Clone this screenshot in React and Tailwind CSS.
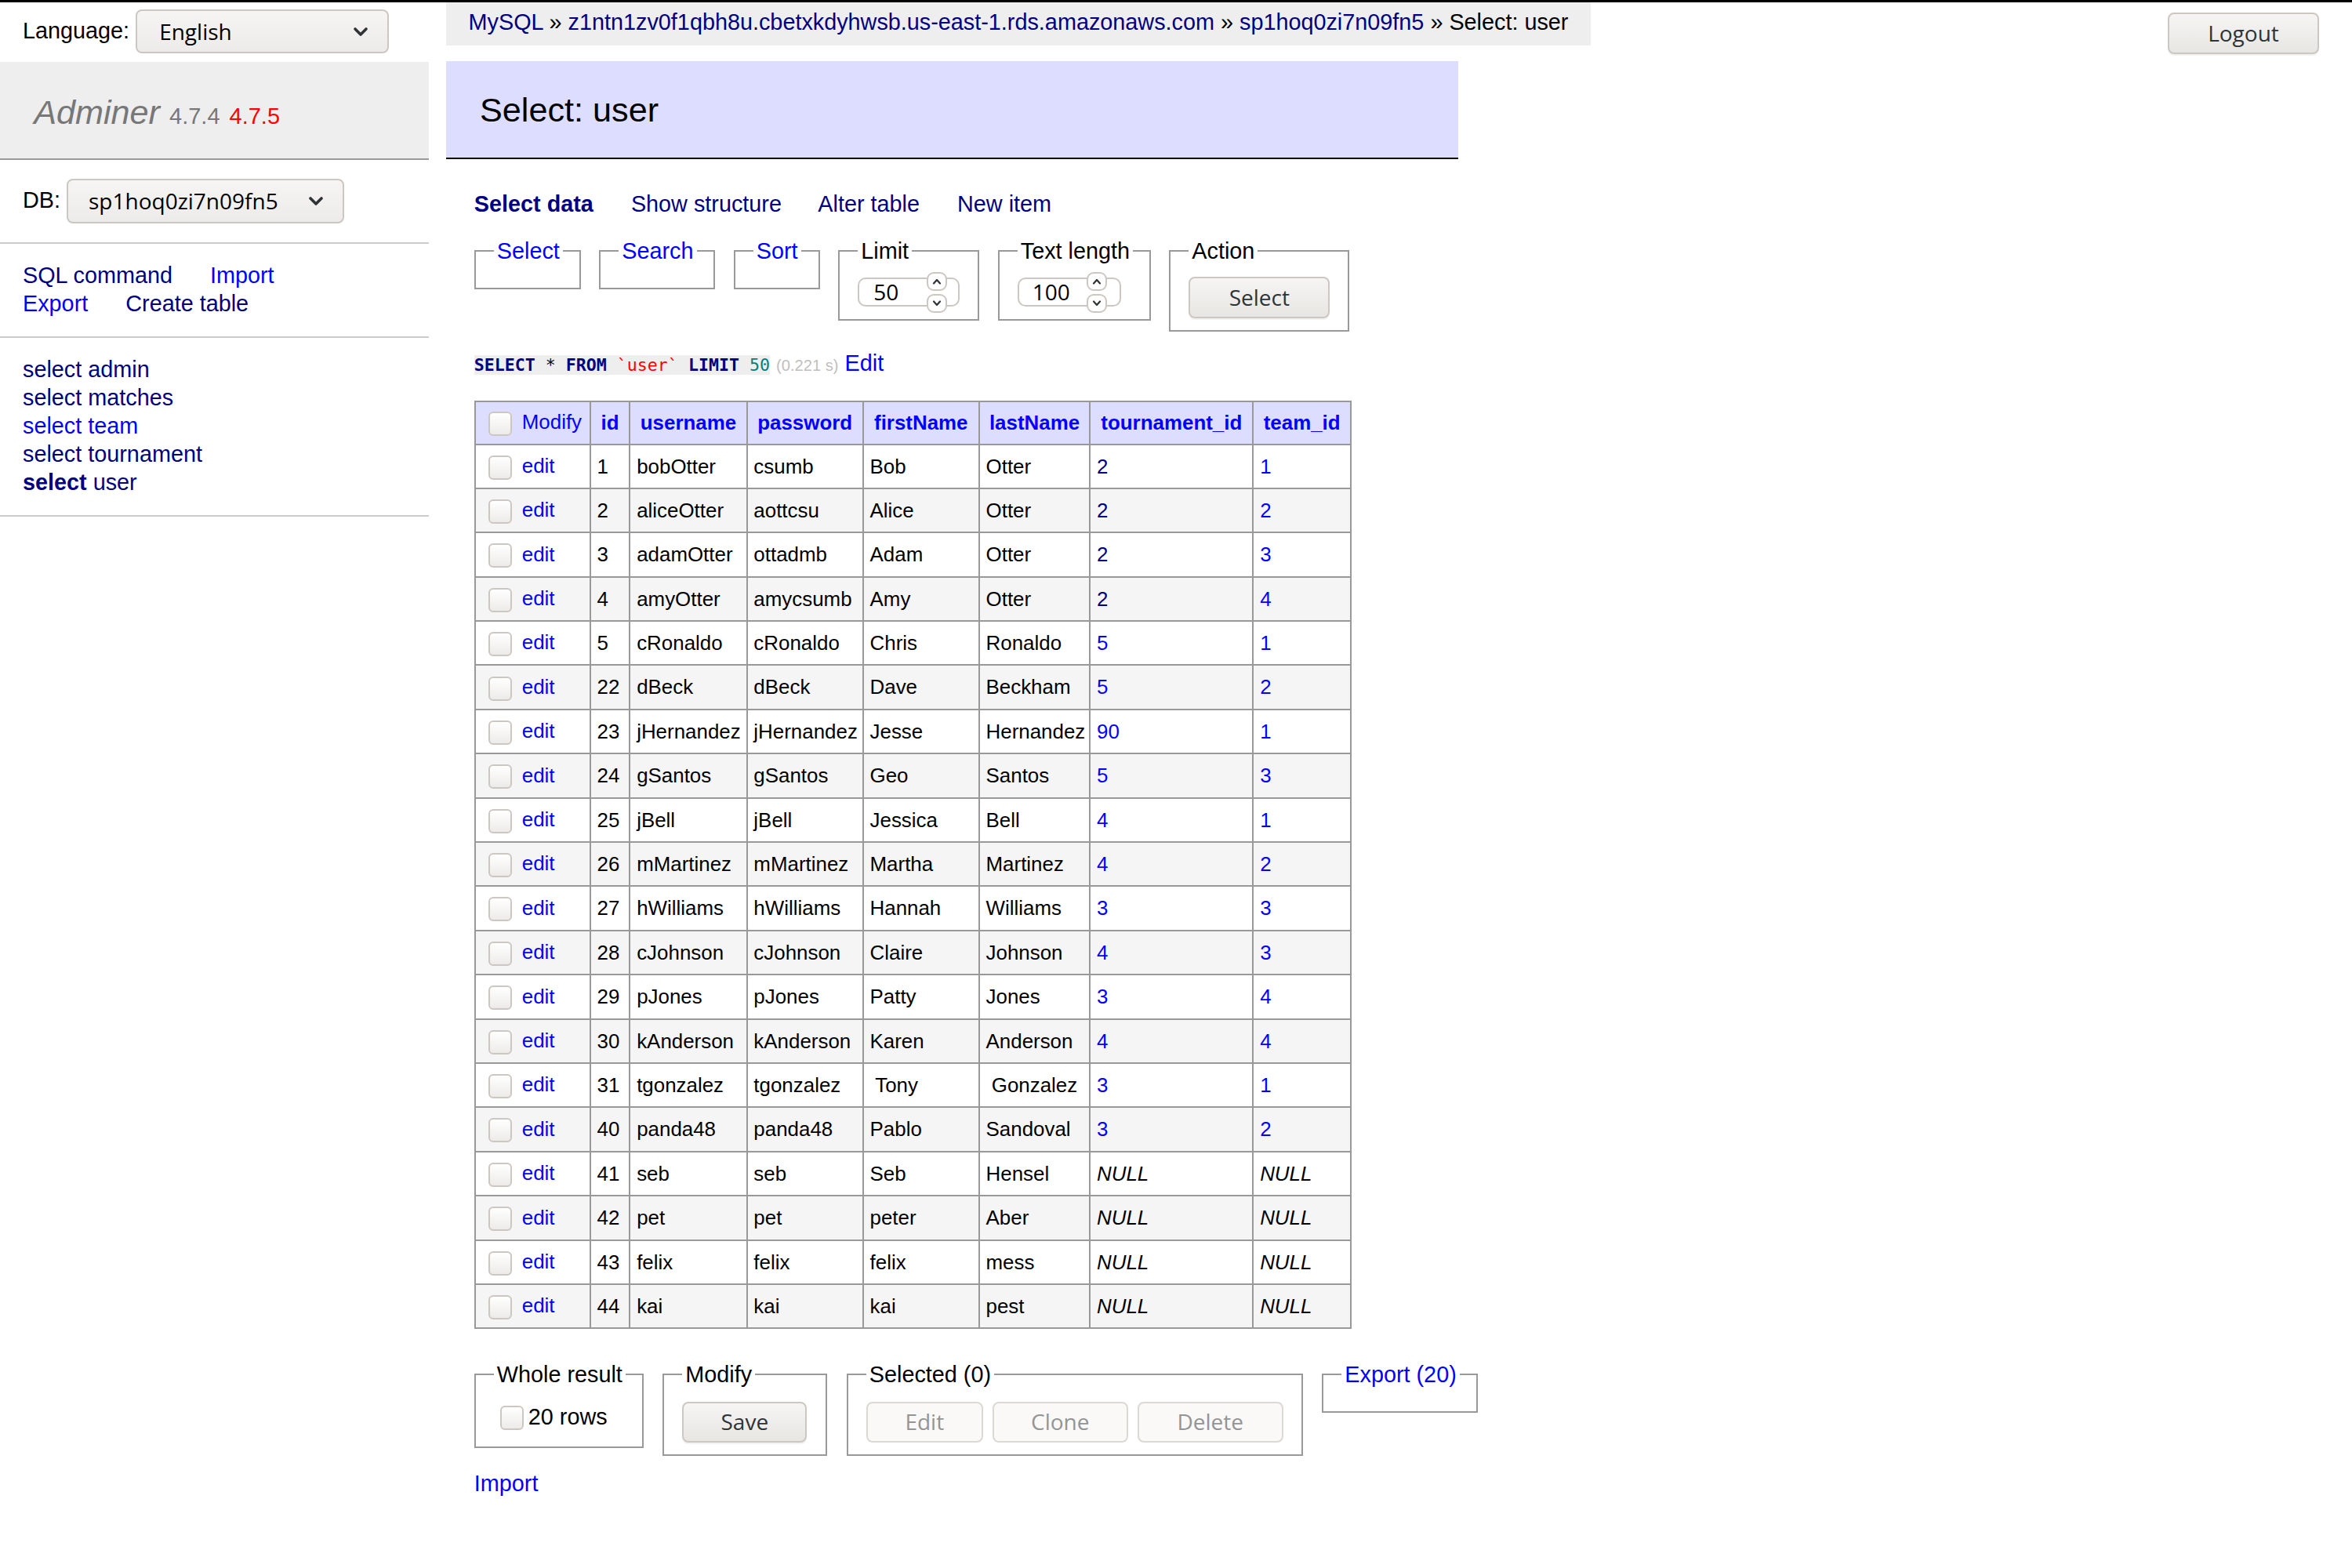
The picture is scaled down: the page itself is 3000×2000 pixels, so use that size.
import React from 'react';

const rows = [
  ['1', 'bobOtter', 'csumb', 'Bob', 'Otter', '2', '1'],
  ['2', 'aliceOtter', 'aottcsu', 'Alice', 'Otter', '2', '2'],
  ['3', 'adamOtter', 'ottadmb', 'Adam', 'Otter', '2', '3'],
  ['4', 'amyOtter', 'amycsumb', 'Amy', 'Otter', '2', '4'],
  ['5', 'cRonaldo', 'cRonaldo', 'Chris', 'Ronaldo', '5', '1'],
  ['22', 'dBeck', 'dBeck', 'Dave', 'Beckham', '5', '2'],
  ['23', 'jHernandez', 'jHernandez', 'Jesse', 'Hernandez', '90', '1'],
  ['24', 'gSantos', 'gSantos', 'Geo', 'Santos', '5', '3'],
  ['25', 'jBell', 'jBell', 'Jessica', 'Bell', '4', '1'],
  ['26', 'mMartinez', 'mMartinez', 'Martha', 'Martinez', '4', '2'],
  ['27', 'hWilliams', 'hWilliams', 'Hannah', 'Williams', '3', '3'],
  ['28', 'cJohnson', 'cJohnson', 'Claire', 'Johnson', '4', '3'],
  ['29', 'pJones', 'pJones', 'Patty', 'Jones', '3', '4'],
  ['30', 'kAnderson', 'kAnderson', 'Karen', 'Anderson', '4', '4'],
  ['31', 'tgonzalez', 'tgonzalez', ' Tony', ' Gonzalez', '3', '1'],
  ['40', 'panda48', 'panda48', 'Pablo', 'Sandoval', '3', '2'],
  ['41', 'seb', 'seb', 'Seb', 'Hensel', null, null],
  ['42', 'pet', 'pet', 'peter', 'Aber', null, null],
  ['43', 'felix', 'felix', 'felix', 'mess', null, null],
  ['44', 'kai', 'kai', 'kai', 'pest', null, null],
];

const columns = ['id', 'username', 'password', 'firstName', 'lastName', 'tournament_id', 'team_id'];

function SelectChevron() {
  return (
    <svg width="20" height="13" viewBox="0 0 20 13" fill="none">
      <polyline points="3,3 10,10 17,3" stroke="#2e3436" strokeWidth="3.6" strokeLinecap="round" strokeLinejoin="round" />
    </svg>
  );
}

function SpinChevron({ up }) {
  return (
    <svg width="12" height="8" viewBox="0 0 12 8" fill="none">
      <polyline
        points={up ? '2,6.5 6,2 10,6.5' : '2,1.5 6,6 10,1.5'}
        stroke="#2e3436"
        strokeWidth="2.2"
        strokeLinecap="round"
        strokeLinejoin="round"
      />
    </svg>
  );
}

function GtkSelect({ value, className = '' }) {
  return (
    <div className={`flex items-center justify-between rounded-[8px] border-2 border-[#cdc7c2] bg-linear-to-b from-[#f6f5f4] to-[#edebe9] pr-[24px] font-['Open_Sans',sans-serif] text-[28px] text-black ${className}`}>
      <span>{value}</span>
      <SelectChevron />
    </div>
  );
}

function GtkButton({ children, disabled, className = '' }) {
  return (
    <button
      type="button"
      className={`flex items-center justify-center rounded-[8px] border-2 font-['Open_Sans',sans-serif] text-[28px] ${
        disabled
          ? 'border-[#dcd8d4] bg-[#faf9f8] text-[#929595]'
          : 'border-[#cdc7c2] bg-linear-to-b from-[#f6f5f4] to-[#e8e6e3] text-[#2e3436] shadow-[0_2px_1px_rgba(0,0,0,0.06)]'
      } ${className}`}
    >
      {children}
    </button>
  );
}

function Checkbox({ className = '' }) {
  return (
    <span className={`inline-block h-[31px] w-[30px] rounded-[6px] border-2 border-[#cdc7c2] bg-linear-to-b from-[#ffffff] to-[#edebe9] align-middle ${className}`} />
  );
}

function NumberInput({ value, pad }) {
  return (
    <div className="relative h-[37px] w-[132px]">
      <div className={`flex h-full w-full items-center rounded-[10px] border-2 border-[#cdc7c2] bg-white font-['Open_Sans',sans-serif] text-[28px] text-black ${pad}`}>
        {value}
      </div>
      {/* spinner buttons sit over the input border */}
      <div className="absolute top-[-7px] left-[88px] flex flex-col gap-[4px]">
        <span className="flex h-[24px] w-[26px] items-center justify-center rounded-[9px] border-2 border-[#cdc7c2] bg-white">
          <SpinChevron up />
        </span>
        <span className="flex h-[24px] w-[26px] items-center justify-center rounded-[9px] border-2 border-[#cdc7c2] bg-white">
          <SpinChevron />
        </span>
      </div>
    </div>
  );
}

function Fieldset({ legend, className = '', children }) {
  return (
    <fieldset className={`min-w-0 shrink-0 border-2 border-[#999] px-[23px] pt-[14.4px] pb-[14.4px] ${className}`}>
      <legend className="px-[4px] leading-[36px] whitespace-nowrap">{legend}</legend>
      {children}
    </fieldset>
  );
}

const cell = 'border-2 border-[#999] px-[7.78px] py-[5.18px] whitespace-pre';

export default function App() {
  return (
    <div className="relative min-h-screen w-full bg-white font-['Liberation_Sans',Arial,Helvetica,sans-serif] text-[28.8px] leading-[1.25] text-black">
      {/* window edge */}
      <div className="pointer-events-none absolute inset-x-0 top-0 h-[3px] bg-black" />

      <div className="flex items-start">
        {/* left menu */}
        <aside className="w-[547px] shrink-0">
          <div className="flex h-[78.5px] items-start pl-[29px] pt-[12px]">
            <div className="flex h-[56px] items-center gap-[8px]">
              <span>Language:</span>
              <GtkSelect value="English" className="h-[56px] w-[323px] pl-[28px]" />
            </div>
          </div>

          <h1 className="h-[125.1px] border-b-2 border-[#999] bg-[#eee] px-[43.2px] pt-[37.5px] pb-[31.6px] text-[43.2px] leading-[1.25] font-normal whitespace-nowrap text-[#777]">
            <a className="italic text-[#777]">Adminer</a>{' '}
            <span className="text-[29px]">4.7.4</span>{' '}
            <a className="text-[29px] text-[#f00]">4.7.5</a>
          </h1>

          <div className="border-b-2 border-[#ccc] px-[29px] py-[23.04px]">
            <div className="flex h-[59px] items-center gap-[8px]">
              <span>DB:</span>
              <GtkSelect value="sp1hoq0zi7n09fn5" className="h-[57px] w-[354px] pl-[26px]" />
            </div>
          </div>

          <p className="border-b-2 border-[#ccc] px-[29px] py-[23.04px]">
            <a className="mr-[40px] text-[#000080]">SQL command</a>{' '}
            <a className="mr-[40px] text-[#0000ff]">Import</a>
            <br />
            <a className="mr-[40px] text-[#0000ff]">Export</a>{' '}
            <a className="mr-[40px] text-[#000080]">Create table</a>
          </p>

          <ul className="border-b-2 border-[#ccc] px-[29px] py-[23.04px] whitespace-nowrap">
            <li>
              <a className="text-[#000080]">select</a> <a className="text-[#000080]">admin</a>
            </li>
            <li>
              <a className="text-[#000080]">select</a> <a className="text-[#000080]">matches</a>
            </li>
            <li>
              <a className="text-[#0000ff]">select</a> <a className="text-[#0000ff]">team</a>
            </li>
            <li>
              <a className="text-[#000080]">select</a> <a className="text-[#000080]">tournament</a>
            </li>
            <li>
              <a className="font-bold text-[#000080]">select</a> <a className="text-[#000080]">user</a>
            </li>
          </ul>
        </aside>

        {/* content */}
        <main className="ml-[21.8px] w-[1291px] shrink-0">
          <div className="h-[57.6px] w-max bg-[#eee] px-[28.8px] leading-[57.6px] whitespace-nowrap">
            <a className="text-[#000080]">MySQL</a> »{' '}
            <a className="text-[#000080]">z1ntn1zv0f1qbh8u.cbetxkdyhwsb.us-east-1.rds.amazonaws.com</a> »{' '}
            <a className="text-[#000080]">sp1hoq0zi7n09fn5</a> » Select: user
          </div>

          <h2 className="mt-[20px] h-[125.1px] border-b-2 border-black bg-[#ddf] px-[43.2px] pt-[35.5px] pb-[33.6px] text-[43.2px] leading-[1.25] font-normal">
            Select: user
          </h2>

          <div className="pl-[36px]">
            <p className="mt-[40px] h-[36px] whitespace-nowrap">
              <a className="mr-[40px] font-bold text-[#000080]">Select data</a>{' '}
              <a className="mr-[40px] text-[#000080]">Show structure</a>{' '}
              <a className="mr-[40px] text-[#000080]">Alter table</a>{' '}
              <a className="mr-[40px] text-[#000080]">New item</a>
            </p>

            <div className="mt-[23.04px] flex items-start gap-[23.5px]">
              <Fieldset className="w-[136px]" legend={<a className="text-[#0000ff]">Select</a>} />
              <Fieldset className="w-[148px]" legend={<a className="text-[#0000ff]">Search</a>} />
              <Fieldset className="w-[110px]" legend={<a className="text-[#0000ff]">Sort</a>} />
              <Fieldset className="w-[180px]" legend="Limit">
                <div className="flex h-[40.5px] items-center">
                  <NumberInput value="50" pad="pl-[18px]" />
                </div>
              </Fieldset>
              <Fieldset className="w-[195px]" legend="Text length">
                <div className="flex h-[40.5px] items-center">
                  <NumberInput value="100" pad="pl-[17px]" />
                </div>
              </Fieldset>
              <Fieldset className="w-[230px]" legend="Action">
                <div className="flex h-[54px] items-center">
                  <GtkButton className="h-[53px] w-[180px]">Select</GtkButton>
                </div>
              </Fieldset>
            </div>

            <p className="mt-[23.04px] h-[36px] whitespace-nowrap">
              <code className="bg-[#eee] font-['DejaVu_Sans_Mono',monospace] text-[21.6px]">
                <b className="text-[#000080]">SELECT</b> * <b className="text-[#000080]">FROM</b>{' '}
                <span className="text-[#f00]">`user`</span> <b className="text-[#000080]">LIMIT</b>{' '}
                <span className="text-[#008080]">50</span>
              </code>{' '}
              <span className="text-[20.16px] text-[#c0c0c0]">(0.221 s)</span>{' '}
              <a className="text-[#0000ff]">Edit</a>
            </p>

            <table className="mt-[29px] w-[1119px] table-fixed border-collapse text-[25.92px] leading-[1.25]">
              <colgroup>
                <col className="w-[147px]" />
                <col className="w-[50.6px]" />
                <col className="w-[149.2px]" />
                <col className="w-[148.2px]" />
                <col className="w-[148px]" />
                <col className="w-[141.5px]" />
                <col className="w-[208.1px]" />
                <col className="w-[124.7px]" />
              </colgroup>
              <thead>
                <tr className="h-[55px] bg-[#ddf]">
                  <td className={`${cell} bg-[#ddf]`}>
                    <Checkbox className="mr-[6px] ml-[8px]" /> <a className="text-[#0000ff]">Modify</a>
                  </td>
                  {columns.map((c) => (
                    <th key={c} className="border-2 border-[#999] bg-[#ddf] px-[10px] py-[5.18px] text-center font-bold whitespace-nowrap">
                      <a className="text-[#0000ff]">{c}</a>
                    </th>
                  ))}
                </tr>
              </thead>
              <tbody>
                {rows.map((r, i) => (
                  <tr key={r[0]} className={`h-[56.4px] ${i % 2 === 1 ? 'bg-[#f5f5f5]' : 'bg-white'}`}>
                    <td className={cell}>
                      <Checkbox className="mr-[6px] ml-[8px]" /> <a className="text-[#0000ff]">edit</a>
                    </td>
                    <td className={cell}>{r[0]}</td>
                    <td className={cell}>{r[1]}</td>
                    <td className={cell}>{r[2]}</td>
                    <td className={cell}>{r[3]}</td>
                    <td className={cell}>{r[4]}</td>
                    <td className={cell}>
                      {r[5] === null ? (
                        <i>NULL</i>
                      ) : (
                        <a className={r[5] === '2' ? 'text-[#000080]' : 'text-[#0000ff]'}>{r[5]}</a>
                      )}
                    </td>
                    <td className={cell}>
                      {r[6] === null ? <i>NULL</i> : <a className="text-[#0000ff]">{r[6]}</a>}
                    </td>
                  </tr>
                ))}
              </tbody>
            </table>

            <div className="mt-[40px] flex items-start gap-[24.5px]">
              <Fieldset className="w-[216px]" legend="Whole result">
                <label className="flex h-[45px] items-center">
                  <Checkbox className="mr-[6px] ml-[8px]" />
                  <span>20 rows</span>
                </label>
              </Fieldset>
              <Fieldset className="w-[210px]" legend="Modify">
                <div className="h-[55px] pt-[2px]">
                  <GtkButton className="h-[52px] w-[159px]">Save</GtkButton>
                </div>
              </Fieldset>
              <Fieldset className="w-[582px]" legend="Selected (0)">
                <div className="flex h-[55px] items-start gap-[12px] pt-[2px]">
                  <GtkButton disabled className="h-[52px] w-[149px]">Edit</GtkButton>
                  <GtkButton disabled className="h-[52px] w-[173px]">Clone</GtkButton>
                  <GtkButton disabled className="h-[52px] w-[186px]">Delete</GtkButton>
                </div>
              </Fieldset>
              <Fieldset className="w-[199px]" legend={<a className="text-[#0000ff]">Export (20)</a>} />
            </div>

            <p className="mt-[18px]">
              <a className="text-[#0000ff]">Import</a>
            </p>
          </div>
        </main>

        <form className="mt-[16px] mr-[42px] ml-auto">
          <GtkButton className="h-[53px] w-[193px]">Logout</GtkButton>
        </form>
      </div>
    </div>
  );
}
